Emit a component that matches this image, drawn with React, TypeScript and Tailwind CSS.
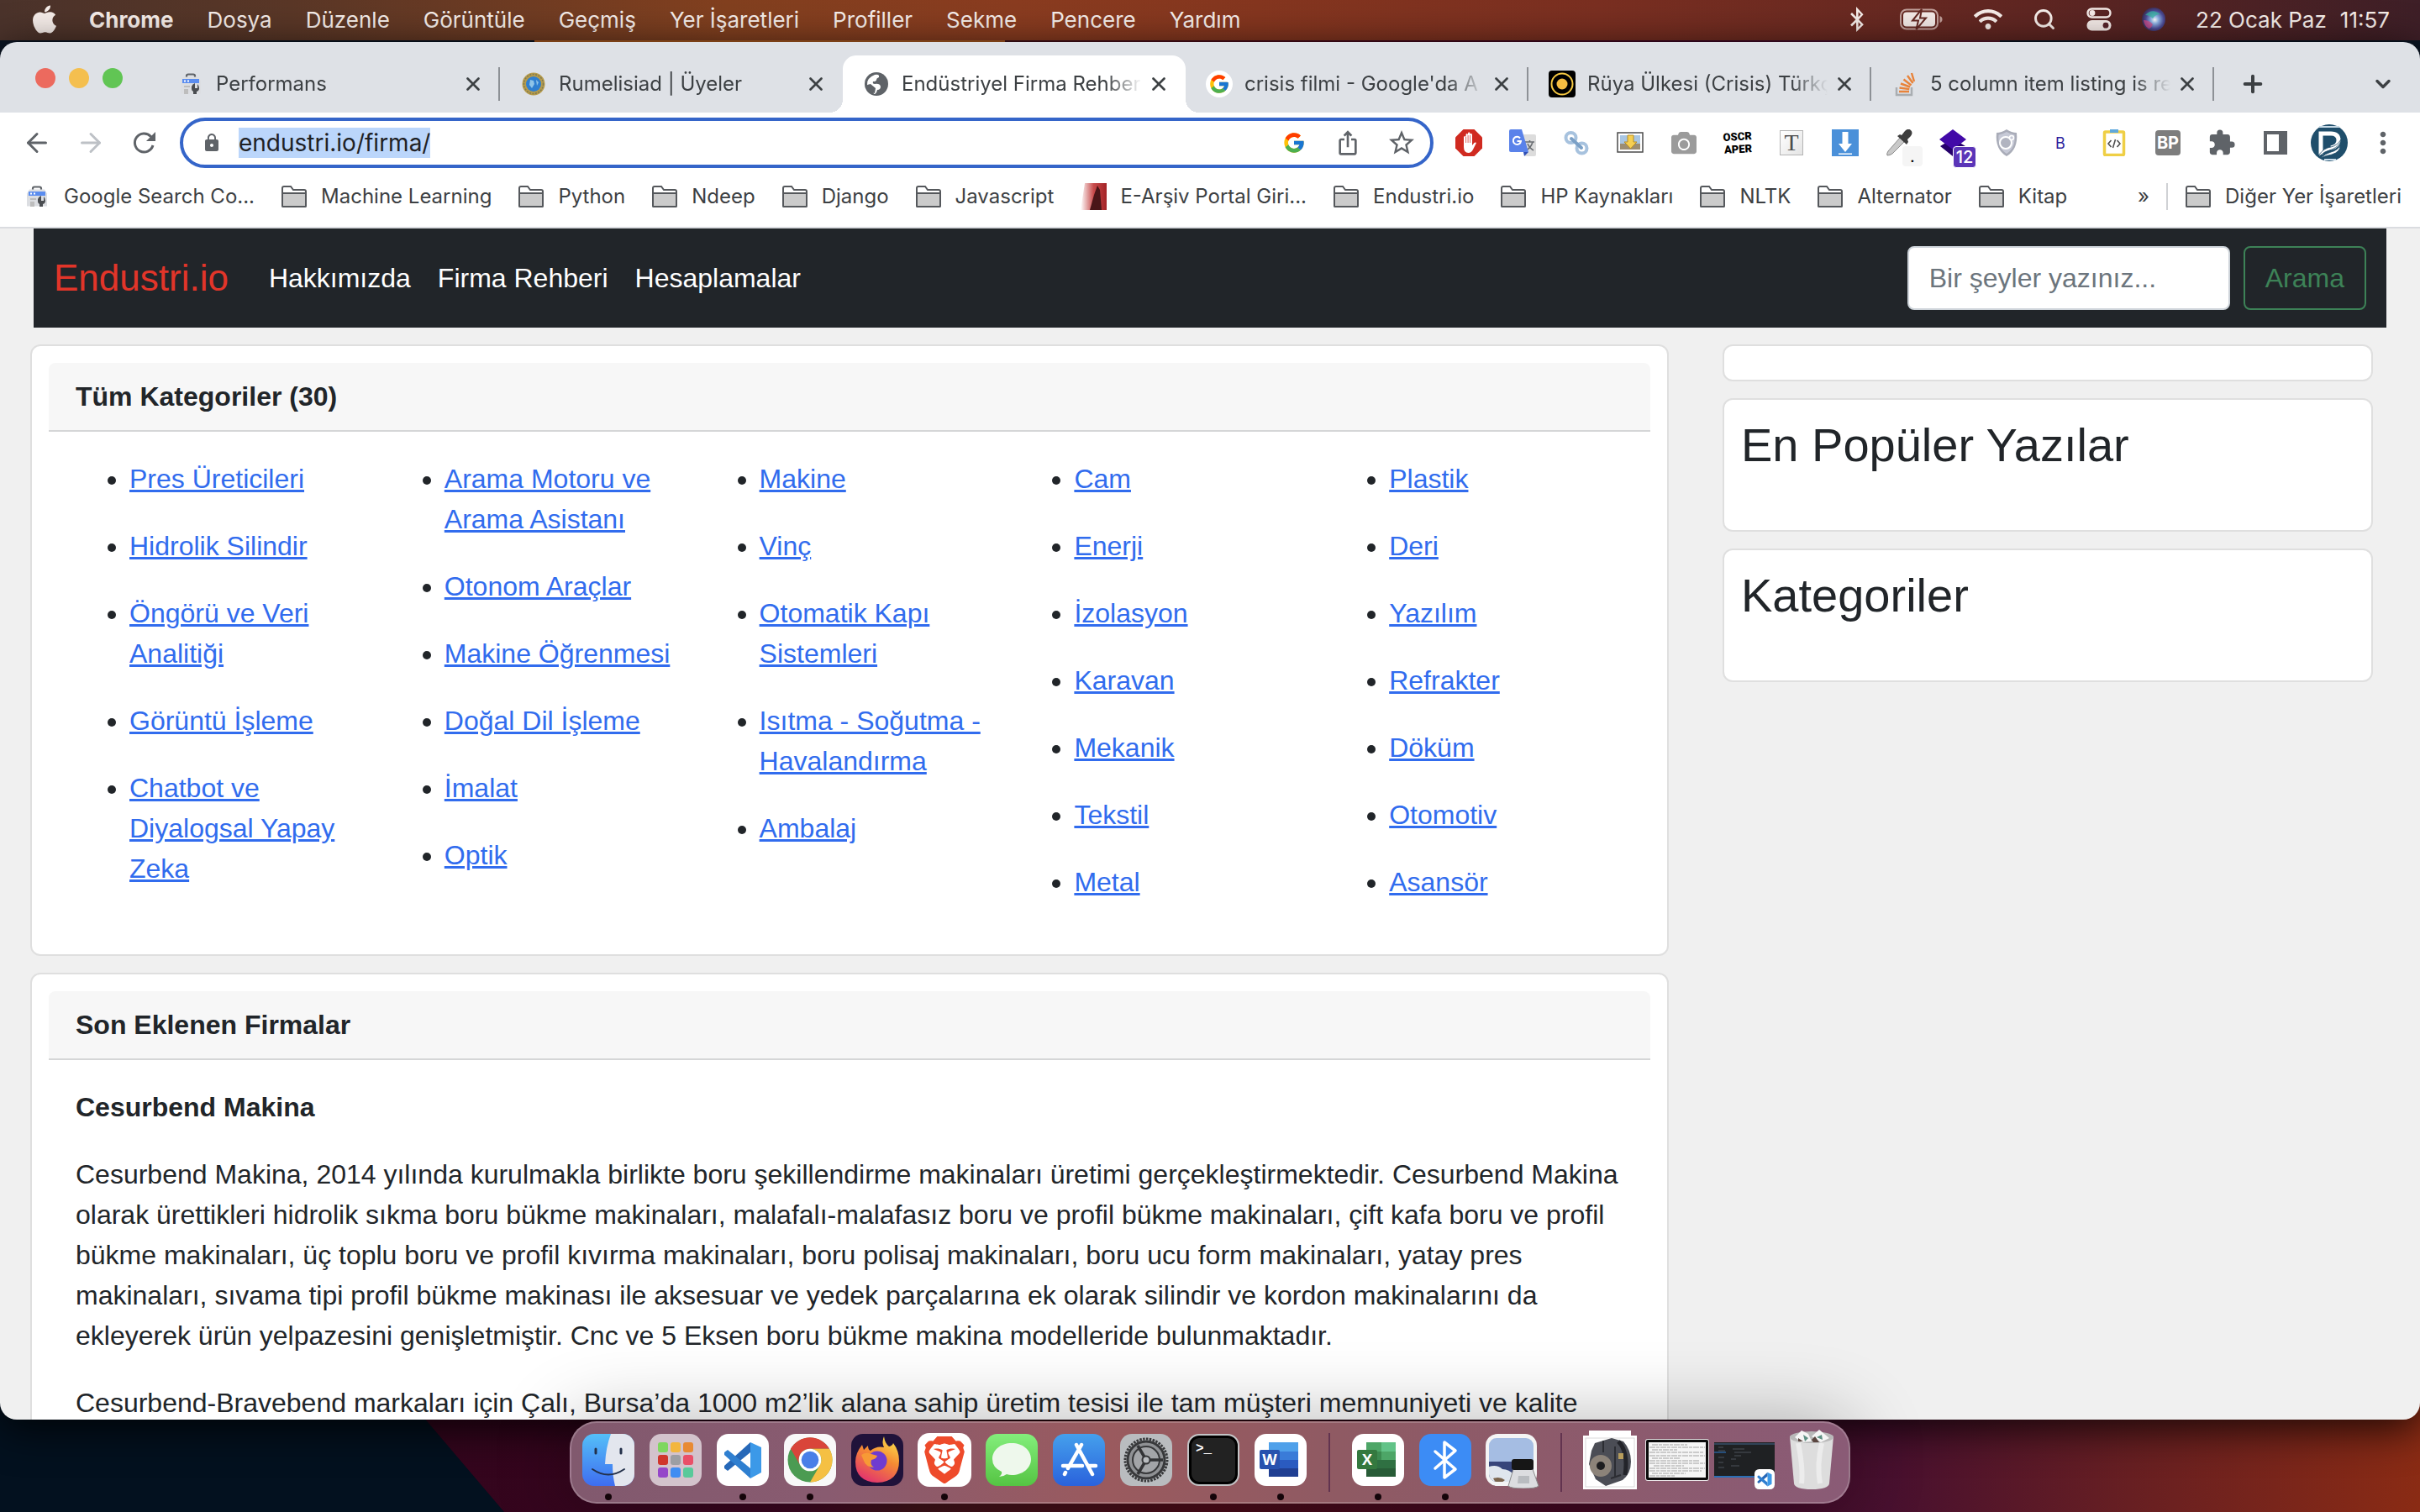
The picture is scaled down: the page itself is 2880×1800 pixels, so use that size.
import React from 'react';
import { FaApple, FaBluetoothB, FaWifi, FaCamera } from 'react-icons/fa';
import { FcGoogle } from 'react-icons/fc';
import { SiBrave } from 'react-icons/si';
import {
  MdExtension,
  MdLock,
  MdMoreVert,
  MdOutlineIosShare,
  MdStarBorder,
} from 'react-icons/md';
import { ArrowLeft, ArrowRight, ChevronDown, Plus, Search, X } from 'lucide-react';

const menuItems = ['Dosya', 'Düzenle', 'Görüntüle', 'Geçmiş', 'Yer İşaretleri', 'Profiller', 'Sekme', 'Pencere', 'Yardım'];

const categoryColumns = [
  ['Pres Üreticileri', 'Hidrolik Silindir', 'Öngörü ve Veri Analitiği', 'Görüntü İşleme', 'Chatbot ve Diyalogsal Yapay Zeka'],
  ['Arama Motoru ve Arama Asistanı', 'Otonom Araçlar', 'Makine Öğrenmesi', 'Doğal Dil İşleme', 'İmalat', 'Optik'],
  ['Makine', 'Vinç', 'Otomatik Kapı Sistemleri', 'Isıtma - Soğutma - Havalandırma', 'Ambalaj'],
  ['Cam', 'Enerji', 'İzolasyon', 'Karavan', 'Mekanik', 'Tekstil', 'Metal'],
  ['Plastik', 'Deri', 'Yazılım', 'Refrakter', 'Döküm', 'Otomotiv', 'Asansör'],
];

/* ---------- small icons ---------- */

const SearchConsoleIcon = () => (
  <svg viewBox="0 0 32 32" className="size-8 shrink-0">
    <path d="M11 8V6.500Q11 4.500 13 4.500h6q2 0 2 2V8" fill="none" stroke="#5f6368" strokeWidth="2.200" />
    <path d="M7 7.500h18l3 5v15H4v-15z" fill="#dcdee2" />
    <path d="M6 10h20v5H6z" fill="#5b8def" />
    <path d="M8 11.500h2v2H8zM12 11.500h2v2h-2z" fill="#fff" />
    <path d="M8 18h7v2H8zM8 22h5v6H8z" fill="#bdbdbd" />
    <path d="M17 17v5q0 2 2 3v3h4v-3q3-1 3-4t-2-5v5h-3v-6q-3 1-4 4z" fill="#4a4d51" />
  </svg>
);

const EmblemIcon = () => (
  <svg viewBox="0 0 32 32" className="size-8 shrink-0">
    <circle cx="16" cy="16" r="13.500" fill="#b79b4b" />
    <circle cx="16" cy="16" r="11.500" fill="none" stroke="#7d7a52" strokeWidth="1.500" strokeDasharray="2 1.500" />
    <circle cx="16" cy="16" r="9" fill="#2f7fd0" />
    <path d="M12 11l4 1 1 4-3 5-3-4zM19 11l3 3-2 4z" fill="#8fc4e8" />
  </svg>
);

const GlobeIcon = () => (
  <svg viewBox="0 0 32 32" className="size-8 shrink-0">
    <circle cx="16" cy="16" r="14" fill="#5f6368" />
    <path d="M14 5q6-1 5 3-3 1-3 3t-4 2q-1 3 2 3 6-1 7 3 0 4-4 4-1 5-4 5-1-4-1-6-4-1-7-5Q4 9 14 5z" fill="#fff" />
    <path d="M9 16l6 5-1 6Q6 25 5 17z" fill="#5f6368" />
  </svg>
);

const GoogleTabIcon = () => (
  <span className="flex size-8 shrink-0 items-center justify-center rounded-full bg-white">
    <FcGoogle size={26} />
  </span>
);

const TargetIcon = () => (
  <svg viewBox="0 0 32 32" className="size-8 shrink-0">
    <rect width="32" height="32" rx="4" fill="#000" />
    <circle cx="16" cy="16" r="12.500" fill="none" stroke="#f5c842" strokeWidth="2" />
    <circle cx="16" cy="16" r="6.500" fill="#f5bd42" />
  </svg>
);

const StackIcon = () => (
  <svg viewBox="0 0 32 32" className="size-8 shrink-0" fill="none">
    <path d="M6 20v9h18v-9" stroke="#a9adb1" strokeWidth="2.500" />
    <path d="M9 25h12M9.500 20.500l11.800 1.600M11 15.500l11 4M14.500 10.500l9 7M19 6l6.500 9M24 3l3 10" stroke="#e8833a" strokeWidth="2.400" />
  </svg>
);

const FolderIcon = () => (
  <svg viewBox="0 0 32 28" className="h-7 w-8 shrink-0">
    <path d="M2 25V4q0-2 2-2h8l3 4h13q2 0 2 2v17q0 1-1 1H3q-1 0-1-1z" fill="#fff" stroke="#55585c" strokeWidth="2" />
    <path d="M2 10h28v15q0 1-1 1H3q-1 0-1-1z" fill="#cbcbcb" stroke="#55585c" strokeWidth="2" />
  </svg>
);

const FlagIcon = () => (
  <svg viewBox="0 0 32 32" className="size-8 shrink-0">
    <defs>
      <linearGradient id="flag">
        <stop offset="0" stopColor="#fff" />
        <stop offset="0.500" stopColor="#c74b4b" />
        <stop offset="1" stopColor="#a32226" />
      </linearGradient>
    </defs>
    <path d="M6 0h26v32H1z" fill="url(#flag)" />
    <path d="M21 3l3 5 2 24H12l5-18z" fill="#4a1618" />
  </svg>
);

const ReloadIcon = () => (
  <svg viewBox="0 0 32 32" className="size-8" fill="none">
    <path d="M26 19a11 11 0 1 1-2.500-10.500l3 3" stroke="#5f6368" strokeWidth="3" />
    <path d="M29 3v11H18z" fill="#5f6368" />
  </svg>
);

/* ---------- extension icons ---------- */

const AdblockIcon = () => (
  <svg viewBox="0 0 32 32" className="size-8">
    <path d="M9.500 0h13L32 9.500v13L22.500 32h-13L0 22.500v-13z" fill="#d02a20" />
    <path d="M10 17V9.500q0-1.500 1.200-1.500T12.500 9.500V6.500q0-1.500 1.200-1.500T15 6.500V5q0-1.400 1.200-1.400T17.500 5v1.500q0-1.400 1.200-1.400T20 6.500V19l2.500-3q1.500-1 2.500 0l-4 8q-2 4-5.500 4Q10 28 10 21z" fill="#fff" />
    <path d="M12.600 9v7M15.100 7v9M17.600 7v9" stroke="#d02a20" strokeWidth="0.700" />
  </svg>
);

const TranslateIcon = () => (
  <svg viewBox="0 0 32 32" className="size-8">
    <path d="M14 6h16q2 0 2 2v22q0 2-2 2H19z" fill="#dcdcdc" />
    <path d="M19 15h11M24.500 13v2M28 15q-2 7-8 10M22 17q2 5 7 8" stroke="#6a6e73" strokeWidth="1.600" fill="none" />
    <path d="M17 27h6l-5 5z" fill="#2f4fb5" />
    <path d="M2 0h13l8 27H2q-2 0-2-2V2q0-2 2-2z" fill="#5a82ea" />
    <path d="M13 10.500A4.600 4.600 0 1 0 14 14H9.500" stroke="#fff" strokeWidth="2" fill="none" />
  </svg>
);

const ChainIcon = () => (
  <svg viewBox="0 0 32 32" className="size-8" fill="none">
    <circle cx="9.500" cy="10" r="6" stroke="#a7c2de" strokeWidth="4" />
    <circle cx="22.500" cy="22.500" r="6" stroke="#a7c2de" strokeWidth="4" />
    <path d="M10 11l12 11" stroke="#7ba0c6" strokeWidth="4" strokeLinecap="round" />
  </svg>
);

const PictureDownloadIcon = () => (
  <svg viewBox="0 0 32 32" className="size-8">
    <rect x="1" y="4" width="30" height="23" fill="#fff" stroke="#4b4b4b" strokeWidth="1.500" />
    <path d="M4 7h24v10H4z" fill="#a9c6e2" />
    <path d="M4 17h24v7H4z" fill="#9c8d73" />
    <path d="M13 7h7v8h4l-7.500 8L9 15h4z" fill="#f6cf52" stroke="#b98d1f" />
  </svg>
);

const OscraperIcon = () => (
  <span className="flex -rotate-3 flex-col text-center font-['Roboto',sans-serif] text-[13px] leading-[15px] font-black text-black">
    <span>OSCR</span>
    <span>APER</span>
  </span>
);

const TextPageIcon = () => (
  <span className="flex h-[30px] w-7 items-center justify-center border border-[#b5b5b5] bg-gradient-to-br from-white to-[#e4e4e4] font-['Liberation_Serif',serif] text-[28px] leading-none text-[#4c4c4c]">
    T
  </span>
);

const DownloadIcon = () => (
  <svg viewBox="0 0 32 32" className="size-8">
    <path d="M0 0h32v32H0z" fill="#4a90d9" />
    <path d="M12.500 3h7v14H24l-8 10-8-10h4.500zM8 28.500h16v1.500H8z" fill="#fff" />
  </svg>
);

const EyedropperIcon = () => (
  <span className="relative">
    <svg viewBox="0 0 32 32" className="size-8">
      <path d="M17 10l5 5L8 29q-3 2-6 2-1-2 1-5z" fill="#c9c9c9" stroke="#8a8a8a" />
      <path d="M14 8l3-2 2 1 4-5q4-4 7-1t0 7l-4 4 1 3-2 3z" fill="#3e3e3e" />
    </svg>
    <span className="absolute top-5 left-5 flex size-6 items-center justify-center rounded bg-[#f5f5f5] text-[20px] leading-none text-black">.</span>
  </span>
);

const LayersIcon = () => (
  <span className="relative">
    <svg viewBox="0 0 32 32" className="size-8">
      <path d="M16 11l15 9-15 12L1 20z" fill="#25006b" />
      <path d="M16 0l16 12-16 12L0 12z" fill="#4209a8" />
    </svg>
    <span className="absolute top-5 left-4 flex h-[26px] w-7 items-center justify-center rounded border border-white bg-[#5b35b8] text-[20px] leading-none font-medium text-white">12</span>
  </span>
);

const ShieldIcon = () => (
  <svg viewBox="0 0 32 32" className="size-8">
    <path d="M16 0q6 4 12 4 2 20-12 28Q2 24 4 4q6 0 12-4z" fill="#a9acb8" />
    <path d="M16 3q5 3 9.500 3.500Q27 22 16 29 5 22 6.500 6.500 11 6 16 3z" fill="#c6c9d6" />
    <circle cx="15" cy="16" r="7" fill="#b1b4c0" stroke="#fff" strokeWidth="2" />
    <circle cx="22" cy="10" r="2.500" fill="#c6c9d6" stroke="#fff" strokeWidth="1.500" />
  </svg>
);

const ClipboardIcon = () => (
  <svg viewBox="0 0 32 32" className="size-8" fill="none">
    <rect x="4.500" y="3" width="23" height="27.500" rx="1" fill="#fff" stroke="#efcf45" strokeWidth="3.500" />
    <path d="M11 0h10v4H11z" fill="#5fa8dc" />
    <path d="M12.500 13l-3.500 4 3.500 4M19.500 13l3.500 4-3.500 4M17.500 12l-3 10" stroke="#505050" strokeWidth="1.600" />
  </svg>
);

const SidePanelIcon = () => (
  <svg viewBox="0 0 32 32" className="size-8">
    <path d="M2 2h28v28H2z" fill="#5f6368" />
    <path d="M6 6h14v20H6z" fill="#fff" />
  </svg>
);

const AvatarIcon = () => (
  <svg viewBox="0 0 44 44" className="size-11">
    <circle cx="22" cy="22" r="22" fill="#1f4e6b" />
    <path d="M10 3h24M16 42h14" stroke="#c8dbe8" strokeWidth="2" />
    <path d="M12 36V11h12q9 0 9 8 0 7-9 9" fill="none" stroke="#fff" strokeWidth="5" />
    <path d="M10 36q6-8 14-9 8-2 12-9-1 8-11 12-9 2-15 8zM12 40q5-5 12-7 8-2 11-8 0 8-10 11-7 1-13 4z" fill="#fff" stroke="#1f4e6b" strokeWidth="0.800" />
  </svg>
);

const extensions = [
  { label: 'AdBlock', icon: <AdblockIcon /> },
  { label: 'Çeviri', icon: <TranslateIcon /> },
  { label: 'Bağlantı', icon: <ChainIcon /> },
  { label: 'Resim indir', icon: <PictureDownloadIcon /> },
  { label: 'Kamera', icon: <FaCamera size={30} color="#9b9b9b" /> },
  { label: 'Oscraper', icon: <OscraperIcon /> },
  { label: 'Metin', icon: <TextPageIcon /> },
  { label: 'İndir', icon: <DownloadIcon /> },
  { label: 'Renk seçici', icon: <EyedropperIcon /> },
  { label: 'Katmanlar', icon: <LayersIcon /> },
  { label: 'Kalkan', icon: <ShieldIcon /> },
  { label: 'B', icon: <span className="text-[18px] text-[#2c1f9e]">B</span> },
  { label: 'Kod', icon: <ClipboardIcon /> },
  { label: 'BP', icon: <span className="flex size-[30px] items-center justify-center rounded-sm bg-[#7d7d7d] text-[20px] font-bold text-white">BP</span> },
  { label: 'Uzantılar', icon: <MdExtension size={34} color="#5f6368" /> },
  { label: 'Yan panel', icon: <SidePanelIcon /> },
  { label: 'Profil', icon: <AvatarIcon /> },
  { label: 'Menü', icon: <MdMoreVert size={40} color="#5f6368" /> },
];

const tabs = [
  { title: 'Performans', icon: <SearchConsoleIcon />, divider: true },
  { title: 'Rumelisiad | Üyeler', icon: <EmblemIcon /> },
  { title: 'Endüstriyel Firma Rehber', icon: <GlobeIcon />, active: true },
  { title: "crisis filmi - Google'da A", icon: <GoogleTabIcon />, divider: true },
  { title: 'Rüya Ülkesi (Crisis) Türkç', icon: <TargetIcon />, divider: true },
  { title: '5 column item listing is re', icon: <StackIcon />, divider: true },
];

const bookmarks = [
  { title: 'Google Search Co...', icon: <SearchConsoleIcon /> },
  { title: 'Machine Learning' },
  { title: 'Python' },
  { title: 'Ndeep' },
  { title: 'Django' },
  { title: 'Javascript' },
  { title: 'E-Arşiv Portal Giri...', icon: <FlagIcon /> },
  { title: 'Endustri.io' },
  { title: 'HP Kaynakları' },
  { title: 'NLTK' },
  { title: 'Alternator' },
  { title: 'Kitap' },
];

/* ---------- menu bar ---------- */

const BatteryIcon = () => (
  <svg viewBox="0 0 52 26" className="h-[26px] w-[52px]">
    <rect x="1" y="1.500" width="44" height="23" rx="7" fill="none" stroke="#c3a19c" strokeWidth="2" />
    <rect x="4" y="4.500" width="38" height="17" rx="4" fill="#f5ebe8" />
    <path d="M47.500 9q3 1 3 4t-3 4z" fill="#c3a19c" />
    <path d="M26 1L15 14.500h7L19.500 25 31 11.500h-7z" fill="#f5ebe8" stroke="#642822" strokeWidth="2" />
  </svg>
);

const ControlCenterIcon = () => (
  <svg viewBox="0 0 30 28" className="h-7 w-[30px]">
    <rect x="1.500" y="1.500" width="27" height="10" rx="5" fill="none" stroke="#f5ebe8" strokeWidth="2.400" />
    <circle cx="7" cy="6.500" r="3.400" fill="#f5ebe8" />
    <rect x="0.500" y="15" width="29" height="12.500" rx="6" fill="#f5ebe8" />
    <circle cx="23" cy="21.200" r="3.400" fill="#57242a" />
  </svg>
);

const SiriIcon = () => (
  <svg viewBox="0 0 28 28" className="size-7">
    <defs>
      <radialGradient id="siri" cx="0.550" cy="0.520" r="0.550">
        <stop offset="0" stopColor="#fff" />
        <stop offset="0.300" stopColor="#8fb4e6" />
        <stop offset="0.700" stopColor="#4b4a96" />
        <stop offset="1" stopColor="#3a2c4f" />
      </radialGradient>
    </defs>
    <circle cx="14" cy="14" r="14" fill="url(#siri)" />
    <path d="M4 9Q12 0 22 8q-6 0-9 5-4-4-9-4z" fill="#35b8a0" opacity="0.700" />
    <path d="M2 15q7 0 11 5-2 5-5 5-5-3-6-10z" fill="#d94a86" opacity="0.700" />
  </svg>
);

const MenuBar = () => (
  <header className="flex h-12 shrink-0 items-center justify-between bg-[linear-gradient(90deg,#4b332b_0%,#5a3727_12%,#82401f_30%,#8a3c20_42%,#85361f_52%,#7a2f21_66%,#5f2622_84%,#3e1f27_100%)] pr-9 pb-0.5 pl-[34px] text-[26px] text-[#f7eeea]">
    <nav className="flex items-center gap-10 whitespace-nowrap">
      <span className="flex items-center gap-[34px] font-bold">
        <FaApple size={38} />
        Chrome
      </span>
      {menuItems.map((item) => (
        <span key={item}>{item}</span>
      ))}
    </nav>
    <div className="flex items-center gap-9 whitespace-nowrap">
      <FaBluetoothB size={30} />
      <BatteryIcon />
      <FaWifi size={34} />
      <Search size={28} strokeWidth={2.5} />
      <ControlCenterIcon />
      <SiriIcon />
      <span className="flex gap-4">
        <span>22 Ocak Paz</span>
        <span>11:57</span>
      </span>
    </div>
  </header>
);

/* ---------- browser chrome ---------- */

const TabStrip = () => (
  <div className="flex shrink-0 bg-[#dee1e6] pt-4">
    <div className="flex w-[187px] shrink-0 gap-4 pt-[15px] pl-[42px]">
      <button aria-label="Kapat" className="size-6 rounded-full bg-[#ec6a5e]" />
      <button aria-label="Küçült" className="size-6 rounded-full bg-[#f4bf4f]" />
      <button aria-label="Büyüt" className="size-6 rounded-full bg-[#61c554]" />
    </div>
    {tabs.map((tab) => (
      <div
        key={tab.title}
        className={
          tab.active
            ? 'relative flex h-[68px] w-[408px] min-w-0 items-center rounded-t-2xl bg-white pr-4 pl-6'
            : 'relative flex h-[68px] w-[408px] min-w-0 items-center pr-4 pl-6'
        }
      >
        {tab.active && (
          <>
            <span className="absolute bottom-0 -left-4 size-4 bg-[radial-gradient(circle_at_0_0,transparent_16px,white_16px)]" />
            <span className="absolute -right-4 bottom-0 size-4 bg-[radial-gradient(circle_at_100%_0,transparent_16px,white_16px)]" />
          </>
        )}
        {tab.icon}
        <span className="ml-3.5 min-w-0 flex-1 overflow-hidden mask-r-from-85% text-[24px] whitespace-nowrap text-[#3c4043]">
          {tab.title}
        </span>
        <button aria-label="Sekmeyi kapat" className="ml-1 flex size-8 shrink-0 items-center justify-center text-[#3c4043]">
          <X size={26} strokeWidth={2.5} />
        </button>
        {tab.divider && <span className="absolute right-0 h-10 w-0.5 bg-[#8d9196]" />}
      </div>
    ))}
    <button aria-label="Yeni sekme" className="ml-6 flex w-11 items-center justify-center text-[#3c4043]">
      <Plus size={32} strokeWidth={3} />
    </button>
    <button aria-label="Sekme ara" className="mr-6 ml-auto flex w-10 items-center justify-center text-[#3c4043]">
      <ChevronDown size={28} strokeWidth={3} />
    </button>
  </div>
);

const Toolbar = () => (
  <div className="flex shrink-0 items-center bg-white px-3 py-1.5">
    <button aria-label="Geri" className="flex w-16 justify-center text-[#5f6368]">
      <ArrowLeft size={36} />
    </button>
    <button aria-label="İleri" className="flex w-16 justify-center text-[#bdc1c6]">
      <ArrowRight size={36} />
    </button>
    <button aria-label="Yenile" className="flex w-16 justify-center">
      <ReloadIcon />
    </button>
    <div className="mx-2.5 flex h-[60px] min-w-0 flex-1 items-center rounded-full border-4 border-[#3565c9] bg-white pr-0.5 pl-[22px]">
      <MdLock size={24} color="#5f6368" />
      <input
        aria-label="Adres çubuğu"
        defaultValue="endustri.io/firma/"
        className="ml-5 field-sizing-content h-9 bg-[#bbd6fb] text-[28px] text-[#202124] outline-none"
      />
      <div className="ml-auto flex items-center">
        <button aria-label="Google" className="flex w-16 justify-center">
          <FcGoogle size={28} />
        </button>
        <button aria-label="Paylaş" className="flex w-16 justify-center">
          <MdOutlineIosShare size={32} color="#5f6368" />
        </button>
        <button aria-label="Yer işareti ekle" className="flex w-16 justify-center">
          <MdStarBorder size={36} color="#5f6368" />
        </button>
      </div>
    </div>
    {extensions.map((ext) => (
      <button key={ext.label} aria-label={ext.label} className="flex w-16 shrink-0 items-center justify-center">
        {ext.icon}
      </button>
    ))}
  </div>
);

const BookmarksBar = () => (
  <div className="flex h-[66px] shrink-0 items-center border-b-2 border-[#dadce0] bg-white pr-[22px] pb-2 pl-7 text-[24px] whitespace-nowrap text-[#3c4043]">
    <div className="flex gap-[31px]">
      {bookmarks.map((bookmark) => (
        <a key={bookmark.title} href="#" className="flex items-center gap-4">
          {bookmark.icon ?? <FolderIcon />}
          {bookmark.title}
        </a>
      ))}
    </div>
    <button aria-label="Diğer" className="mr-5 ml-auto">»</button>
    <span className="mr-5 h-8 w-0.5 bg-[#d0d2d5]" />
    <a href="#" className="flex items-center gap-4">
      <FolderIcon />
      Diğer Yer İşaretleri
    </a>
  </div>
);

/* ---------- web page ---------- */

const Navbar = () => (
  <nav className="mx-10 flex items-center bg-[#212529] px-6 py-[21px]">
    <a href="#" className="mr-8 text-[44px] leading-[60px] text-[#e23529]">Endustri.io</a>
    <div className="flex text-white">
      <a href="#" className="px-4">Hakkımızda</a>
      <a href="#" className="px-4">Firma Rehberi</a>
      <a href="#" className="px-4">Hesaplamalar</a>
    </div>
    <form className="ml-auto flex gap-4" onSubmit={(e) => e.preventDefault()}>
      <input
        type="search"
        aria-label="Arama"
        placeholder="Bir şeyler yazınız..."
        className="h-[76px] w-96 rounded-lg border-2 border-[#ced4da] bg-white px-6 placeholder:text-[#6c757d]"
      />
      <button className="h-[76px] rounded-lg border-2 border-[#3d8257] px-6 text-[#3d8257]">Arama</button>
    </form>
  </nav>
);

const Card = ({ children }: { children?: React.ReactNode }) => (
  <section className="rounded-xl border-2 border-[#dfdfdf] bg-white p-5">{children}</section>
);

const CardHeader = ({ children }: { children: React.ReactNode }) => (
  <h2 className="rounded-t-lg border-b-2 border-[#d5d6d7] bg-[#f7f7f7] px-8 py-4 font-bold">{children}</h2>
);

const FirmPage = () => (
  <div className="min-h-0 flex-1 overflow-hidden bg-[#f0f0f0] font-['Liberation_Sans',Arial,sans-serif] text-[32px] leading-[48px] text-[#212529]">
    <Navbar />
    <div className="mt-5 mr-14 ml-9 flex items-start gap-16">
      <main className="flex min-w-0 flex-1 flex-col gap-5">
        <Card>
          <CardHeader>Tüm Kategoriler (30)</CardHeader>
          <div className="grid grid-cols-5 gap-8 px-8 pt-8 pb-[42px]">
            {categoryColumns.map((column) => (
              <ul key={column[0]} className="flex list-disc flex-col gap-8 pl-16">
                {column.map((category) => (
                  <li key={category}>
                    <a href="#" className="text-[#316cee] underline">{category}</a>
                  </li>
                ))}
              </ul>
            ))}
          </div>
        </Card>
        <Card>
          <CardHeader>Son Eklenen Firmalar</CardHeader>
          <div className="flex flex-col gap-8 p-8">
            <h3 className="font-bold">Cesurbend Makina</h3>
            <p>
              Cesurbend Makina, 2014 yılında kurulmakla birlikte boru şekillendirme makinaları üretimi
              gerçekleştirmektedir. Cesurbend Makina olarak ürettikleri hidrolik sıkma boru bükme makinaları,
              malafalı-malafasız boru ve profil bükme makinaları, çift kafa boru ve profil bükme makinaları, üç toplu
              boru ve profil kıvırma makinaları, boru polisaj makinaları, boru ucu form makinaları, yatay pres
              makinaları, sıvama tipi profil bükme makinası ile aksesuar ve yedek parçalarına ek olarak silindir ve
              kordon makinalarını da ekleyerek ürün yelpazesini genişletmiştir. Cnc ve 5 Eksen boru bükme makina
              modelleride bulunmaktadır.
            </p>
            <p>
              Cesurbend-Bravebend markaları için Çalı, Bursa’da 1000 m2’lik alana sahip üretim tesisi ile tam müşteri
              memnuniyeti ve kalite
            </p>
          </div>
        </Card>
      </main>
      <aside className="flex w-[774px] shrink-0 flex-col gap-5">
        <Card />
        <Card>
          <h4 className="pb-12 text-[56px] leading-[67px]">En Popüler Yazılar</h4>
        </Card>
        <Card>
          <h4 className="pb-12 text-[56px] leading-[67px]">Kategoriler</h4>
        </Card>
      </aside>
    </div>
  </div>
);

/* ---------- dock ---------- */

const FinderIcon = () => (
  <svg viewBox="0 0 62 62" className="size-[62px]">
    <defs>
      <linearGradient id="finder" x2="0" y2="1">
        <stop offset="0" stopColor="#54bff8" />
        <stop offset="1" stopColor="#3e6df0" />
      </linearGradient>
      <clipPath id="finderClip">
        <rect width="62" height="62" rx="14" />
      </clipPath>
    </defs>
    <g clipPath="url(#finderClip)">
      <rect width="62" height="62" fill="url(#finder)" />
      <path d="M34 0q-6 16-7 36h9q0 14 3 26h23V0z" fill="#e3e6ee" />
      <path d="M16 18v5M46 18v5" stroke="#23304a" strokeWidth="3" strokeLinecap="round" />
      <path d="M12 42q19 13 38 0" fill="none" stroke="#23304a" strokeWidth="2" strokeLinecap="round" />
    </g>
  </svg>
);

const launchpadColors = ['#7fd75f', '#f3b63e', '#e88a33', '#d0352c', '#9c9ea3', '#ea4f68', '#9546c9', '#3f8df2', '#58c99a'];

const LaunchpadIcon = () => (
  <svg viewBox="0 0 62 62" className="size-[62px]">
    <rect width="62" height="62" rx="14" fill="#d3c3cc" />
    {launchpadColors.map((color, i) => (
      <rect key={color} x={10 + (i % 3) * 15} y={10 + Math.floor(i / 3) * 15} width="12" height="12" rx="3" fill={color} />
    ))}
  </svg>
);

const VsCodeMark = () => (
  <>
    <path d="M40 10L53 16v30l-13 7z" fill="#3c99e8" />
    <path d="M40 10v12L13 44l-4-3v-3z" fill="#2668b8" />
    <path d="M40 53V41L13 19l-4 3v3z" fill="#2f7fd0" />
  </>
);

const VsCodeIcon = () => (
  <svg viewBox="0 0 62 62" className="size-[62px]">
    <rect width="62" height="62" rx="14" fill="#fff" />
    <VsCodeMark />
  </svg>
);

const ChromeIcon = () => (
  <svg viewBox="0 0 62 62" className="size-[62px]">
    <rect width="62" height="62" rx="14" fill="#f8f8f8" />
    <circle cx="31" cy="31" r="26.500" fill="#4b9b52" />
    <path d="M8 17.700A26.500 26.500 0 0 1 54 17.700H31A13.300 13.300 0 0 0 19.500 37.700z" fill="#d9453a" />
    <path d="M54 17.700A26.500 26.500 0 0 1 31 57.500L42.500 37.700A13.300 13.300 0 0 0 31 17.700z" fill="#f5c043" />
    <circle cx="31" cy="31" r="13.300" fill="#fff" />
    <circle cx="31" cy="31" r="10.300" fill="#4a7fe8" />
  </svg>
);

const FirefoxIcon = () => (
  <svg viewBox="0 0 62 62" className="size-[62px]">
    <defs>
      <linearGradient id="fox" x1="0.800" x2="0.300" y2="1">
        <stop offset="0" stopColor="#fbe04c" />
        <stop offset="0.450" stopColor="#f58a33" />
        <stop offset="1" stopColor="#e2336f" />
      </linearGradient>
    </defs>
    <rect width="62" height="62" rx="14" fill="#20123a" />
    <path d="M39 3q1 8 6 12 4-1 5-4 7 9 7 21 0 25-26 26Q5 57 5 33q0-10 8-20l2 6 5-5q0 5 3 6 7-6 16-4-3-6 0-13z" fill="url(#fox)" />
    <circle cx="31" cy="32" r="11.500" fill="#6f3bd0" />
    <path d="M12 25q6-4 12-1l7 2q-1 4-7 5-2 6 3 9-10-1-12-8z" fill="#f79a35" />
  </svg>
);

const BraveIcon = () => (
  <span className="flex size-16 items-center justify-center rounded-[14px] bg-white text-[#ee4b2b]">
    <SiBrave size={56} />
  </span>
);

const MessagesIcon = () => (
  <svg viewBox="0 0 62 62" className="size-[62px]">
    <defs>
      <linearGradient id="msg" x2="0" y2="1">
        <stop offset="0" stopColor="#83ee7b" />
        <stop offset="1" stopColor="#55c443" />
      </linearGradient>
    </defs>
    <rect width="62" height="62" rx="14" fill="url(#msg)" />
    <path d="M31 11c13 0 23 8 23 19S44 49 31 49q-3 0-6-1-4 3-9 3 4-3 3-6Q8 40 8 30C8 19 18 11 31 11z" fill="#eef8ec" />
  </svg>
);

const AppStoreIcon = () => (
  <svg viewBox="0 0 62 62" className="size-[62px]">
    <defs>
      <linearGradient id="store" x2="0" y2="1">
        <stop offset="0" stopColor="#45a0ec" />
        <stop offset="1" stopColor="#2a62dc" />
      </linearGradient>
    </defs>
    <rect width="62" height="62" rx="14" fill="url(#store)" />
    <path d="M34 13L18 41M28 13l19 35M12 38h23M43 38h8M15 46l-1 2" stroke="#fff" strokeWidth="4.500" strokeLinecap="round" />
  </svg>
);

const SettingsIcon = () => (
  <svg viewBox="0 0 62 62" className="size-[62px]" fill="none">
    <rect width="62" height="62" rx="14" fill="#b9bcbf" />
    <circle cx="31" cy="31" r="25" stroke="#37383a" strokeWidth="3" strokeDasharray="2.500 1.400" />
    <circle cx="31" cy="31" r="22" fill="#8f9194" stroke="#37383a" strokeWidth="3" />
    <circle cx="31" cy="31" r="16" stroke="#37383a" strokeWidth="2" fill="#a3a5a8" />
    <path d="M31 31h20M31 31L21 14M31 31L21 48" stroke="#333436" strokeWidth="3.500" />
    <circle cx="31" cy="31" r="4.500" fill="#b9bcbf" stroke="#333436" strokeWidth="2" />
  </svg>
);

const TerminalIcon = () => (
  <span className="flex size-[62px] rounded-[14px] border-2 border-[#c4c4c6] bg-[#222222] ring-3 ring-black ring-inset">
    <span className="pt-2 pl-2 font-['Liberation_Mono',monospace] text-[16px] leading-4 font-bold text-white">&gt;_</span>
  </span>
);

const WordIcon = () => (
  <svg viewBox="0 0 62 62" className="size-[62px]">
    <rect width="62" height="62" rx="14" fill="#fff" />
    <path d="M17 10h35v11H17z" fill="#4fa0ea" />
    <path d="M17 21h35v10H17z" fill="#3a7bd8" />
    <path d="M17 31h35v10H17z" fill="#2a5bc0" />
    <path d="M17 41h35v10H17z" fill="#203f92" />
    <rect x="6" y="19" width="24" height="23" rx="2" fill="#2752ae" />
    <text x="18" y="37" textAnchor="middle" fontSize="18" fontWeight="700" fill="#fff" fontFamily="Open Sans, sans-serif">W</text>
  </svg>
);

const ExcelIcon = () => (
  <svg viewBox="0 0 62 62" className="size-[62px]">
    <rect width="62" height="62" rx="14" fill="#fff" />
    <path d="M17 10h18v11H17z" fill="#4da667" />
    <path d="M35 10h17v11H35z" fill="#62c388" />
    <path d="M17 21h18v10H17z" fill="#3c8a50" />
    <path d="M35 21h17v10H35z" fill="#4da667" />
    <path d="M17 31h35v10H17z" fill="#2f7042" />
    <path d="M17 41h35v10H17z" fill="#285c37" />
    <rect x="6" y="19" width="24" height="23" rx="2" fill="#34793f" />
    <text x="18" y="37" textAnchor="middle" fontSize="18" fontWeight="700" fill="#fff" fontFamily="Open Sans, sans-serif">X</text>
  </svg>
);

const BluetoothIcon = () => (
  <svg viewBox="0 0 62 62" className="size-[62px]" fill="none">
    <rect width="62" height="62" rx="14" fill="#3c8cf5" />
    <path d="M19 21l24 21-13 10V10l13 10-24 21" stroke="#fff" strokeWidth="3.500" strokeLinejoin="round" strokeLinecap="round" />
  </svg>
);

const PreviewIcon = () => (
  <svg viewBox="0 0 64 68" className="h-[68px] w-16">
    <defs>
      <clipPath id="photoClip">
        <rect x="4" y="8" width="53" height="52" rx="9" />
      </clipPath>
    </defs>
    <rect y="3" width="61" height="62" rx="14" fill="#f4f4f4" />
    <g clipPath="url(#photoClip)">
      <path d="M4 8h53v30H4z" fill="#a5bde3" />
      <path d="M4 36h53v24H4z" fill="#37457a" />
      <path d="M4 42q10-3 16 3 8 0 14 7v10H4z" fill="#dfe6ee" />
      <path d="M9 56q8-3 14 2l-4 3H12z" fill="#7b654e" />
    </g>
    <path d="M33 45h23l7 20q-3 3-18 3t-18-3z" fill="#dcdde0" stroke="#8b8b8b" />
    <path d="M39 53h13v9H38z" fill="#b9bcc0" />
    <rect x="31" y="33" width="26" height="13" rx="3" fill="#161616" />
  </svg>
);

const DocumentsIcon = () => (
  <svg viewBox="0 0 64 72" className="h-[72px] w-16">
    <rect x="7" y="1" width="50" height="62" fill="#fff" />
    <rect y="7" width="64" height="64" fill="#fff" />
    <rect x="3" y="10" width="58" height="58" fill="none" stroke="#d9d9d9" />
    <path d="M14 16l20-6 14 4q9 10 9 24T47 60l-20 7-12-8-8-18 3-16z" fill="#4b4d55" />
    <path d="M42 14q12 12 8 40" fill="none" stroke="#23242a" strokeWidth="5" />
    <path d="M24 13v14M33 58l12-4M38 20v36" stroke="#2c2d33" strokeWidth="2" />
    <circle cx="21" cy="43" r="13" fill="#8c8379" />
    <circle cx="21" cy="43" r="5" fill="#1d1d1f" />
    <rect x="42" y="28" width="6" height="7" fill="#b79d5c" />
  </svg>
);

const MinimizedEditorIcon = () => (
  <svg viewBox="0 0 76 50" className="h-[50px] w-[76px]">
    <rect width="76" height="50" rx="3" fill="#e8e4e6" />
    <rect x="1" y="1" width="74" height="48" rx="2" fill="#0b0b0b" />
    <rect x="4" y="4" width="68" height="42" fill="#f5f5f5" />
    <path d="M8 7h42M5 10h66M8 13h30M5 16h64M5 20h66M8 23h34M5 26h60M5 29h66M10 32h36M5 35h66M5 38h62M8 41h40M5 44h30" stroke="#a2a2a2" strokeWidth="1.200" strokeDasharray="7 1 4 1" />
  </svg>
);

const MinimizedCodeIcon = () => (
  <span className="relative">
    <svg viewBox="0 0 72 42" className="h-[42px] w-[72px]">
      <rect width="72" height="42" fill="#1f2123" />
      <path d="M0 2h72" stroke="#39506b" strokeWidth="1.500" />
      <path d="M5 6h6M5 10h8M5 18h7M5 24h6M5 30h7M22 8h14M24 12h20M24 16h8M20 20h6M20 28h10" stroke="#4d535a" strokeWidth="1.200" />
      <path d="M0 12h14" stroke="#2a5e97" strokeWidth="1.500" />
      <path d="M0 41h50" stroke="#2b6fb5" strokeWidth="2" />
    </svg>
    <svg viewBox="0 0 62 62" className="absolute top-8 left-12 size-6">
      <rect width="62" height="62" rx="14" fill="#fff" />
      <VsCodeMark />
    </svg>
  </span>
);

const TrashIcon = () => (
  <svg viewBox="0 0 56 72" className="h-[72px] w-14">
    <path d="M2 8q26-10 52 0l-5 56q-1 7-21 7T7 64z" fill="#dddddd" />
    <path d="M12 16q6 30 4 48M40 16q-6 26-2 48" stroke="#ececec" strokeWidth="6" fill="none" />
    <ellipse cx="28" cy="9" rx="26" ry="7" fill="#b9b9b9" />
    <path d="M8 9l8-8 8 4 4 9-12 1zM28 8l9-8 6 5 6 5-10 5z" fill="#f5f5f5" />
    <path d="M18 6l6 4-4 4zM34 9l6-3 1 6z" fill="#5d8f82" />
    <path d="M12 10l6 4h-6zM28 12l4-4 5 7h-7z" fill="#5b4640" />
  </svg>
);

const dockGroups = [
  [
    { label: 'Finder', icon: <FinderIcon />, open: true },
    { label: 'Launchpad', icon: <LaunchpadIcon /> },
    { label: 'VS Code', icon: <VsCodeIcon />, open: true },
    { label: 'Chrome', icon: <ChromeIcon />, open: true },
    { label: 'Firefox', icon: <FirefoxIcon /> },
    { label: 'Brave', icon: <BraveIcon />, open: true },
    { label: 'Mesajlar', icon: <MessagesIcon /> },
    { label: 'App Store', icon: <AppStoreIcon /> },
    { label: 'Ayarlar', icon: <SettingsIcon /> },
    { label: 'Terminal', icon: <TerminalIcon />, open: true },
    { label: 'Word', icon: <WordIcon />, open: true },
  ],
  [
    { label: 'Excel', icon: <ExcelIcon />, open: true },
    { label: 'Bluetooth', icon: <BluetoothIcon />, open: true },
    { label: 'Önizleme', icon: <PreviewIcon /> },
  ],
  [
    { label: 'Belgeler', icon: <DocumentsIcon /> },
    { label: 'Düzenleyici', icon: <MinimizedEditorIcon /> },
    { label: 'Kod', icon: <MinimizedCodeIcon /> },
    { label: 'Çöp Sepeti', icon: <TrashIcon /> },
  ],
];

const Dock = () => (
  <footer className="relative flex shrink-0 justify-center pt-0.5 pb-2.5">
    <div className="flex h-[98px] rounded-[32px] border-2 border-white/20 bg-[linear-gradient(90deg,#81596e_0%,#895b70_20%,#9a5a5e_42%,#8f5a63_60%,#8a5b76_100%)] px-1 shadow-[0_0_90px_rgba(0,0,0,0.3)]">
      {dockGroups.map((group, i) => (
        <div key={i} className="flex">
          {i > 0 && <span className="mx-[17px] mt-3 h-[70px] w-0.5 bg-[#62334f]" />}
          {group.map((app) => (
            <button key={app.label} aria-label={app.label} className="relative flex w-20 items-center justify-center pb-1.5">
              {app.icon}
              {app.open && <span className="absolute bottom-0.5 size-2 rounded-full bg-[#140409]" />}
            </button>
          ))}
        </div>
      ))}
    </div>
  </footer>
);

const Wallpaper = () => (
  <svg viewBox="0 0 2880 1800" preserveAspectRatio="none" className="absolute inset-0 size-full">
    <defs>
      <linearGradient id="wall">
        <stop offset="0" stopColor="#2b0419" />
        <stop offset="0.330" stopColor="#3a0620" />
        <stop offset="0.380" stopColor="#3c1218" />
        <stop offset="0.500" stopColor="#480b18" />
        <stop offset="0.700" stopColor="#3c0724" />
        <stop offset="0.780" stopColor="#48102f" />
        <stop offset="0.880" stopColor="#671f22" />
        <stop offset="1" stopColor="#8a2b14" />
      </linearGradient>
    </defs>
    <rect width="2880" height="1800" fill="url(#wall)" />
    <path d="M0 1600h430l170 200H0z" fill="#03111f" />
    <path d="M0 0h636v400H0zM2380 0h500v400h-500z" fill="#0a1422" />
    <path d="M636 0h560v100H636z" fill="#a9581f" />
  </svg>
);

export default function App() {
  return (
    <div className="relative flex h-screen flex-col overflow-hidden bg-[#2b0419] font-['Inter',sans-serif]">
      <Wallpaper />
      <div className="relative flex min-h-0 flex-1 flex-col">
        <MenuBar />
        <div className="mt-0.5 flex min-h-0 flex-1 flex-col overflow-hidden rounded-[20px] shadow-[0_10px_50px_rgba(0,0,0,0.8)]">
          <TabStrip />
          <Toolbar />
          <BookmarksBar />
          <FirmPage />
        </div>
      </div>
      <Dock />
    </div>
  );
}
